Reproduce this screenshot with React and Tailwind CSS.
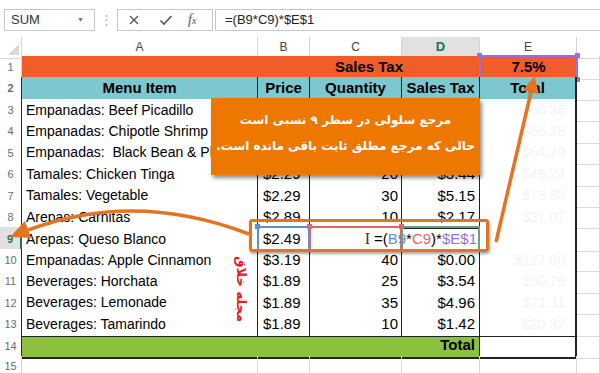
import React from 'react';

const grid = 'grid grid-cols-[22px_236px_52px_92px_78px_97px_1fr]';

const items = [
  { n: 3, a: 'Empanadas: Beef Picadillo', b: '$2.99', c: '25', d: '$5.61', e: '$80.36' },
  { n: 4, a: 'Empanadas: Chipotle Shrimp', b: '$3.49', c: '15', d: '$3.93', e: '$56.28' },
  { n: 5, a: 'Empanadas:  Black Bean & Plantain', b: '$2.99', c: '20', d: '$4.49', e: '$64.29' },
  { n: 6, a: 'Tamales: Chicken Tinga', b: '$2.29', c: '20', d: '$3.44', e: '$49.24' },
  { n: 7, a: 'Tamales: Vegetable', b: '$2.29', c: '30', d: '$5.15', e: '$73.85' },
  { n: 8, a: 'Arepas: Carnitas', b: '$2.89', c: '10', d: '$2.17', e: '$31.07' },
  { n: 9, a: 'Arepas: Queso Blanco', b: '$2.49', c: '', d: null, e: '' },
  { n: 10, a: 'Empanadas: Apple Cinnamon', b: '$3.19', c: '40', d: '$0.00', e: '$127.60' },
  { n: 11, a: 'Beverages: Horchata', b: '$1.89', c: '25', d: '$3.54', e: '$50.79' },
  { n: 12, a: 'Beverages: Lemonade', b: '$1.89', c: '35', d: '$4.96', e: '$71.11' },
  { n: 13, a: 'Beverages: Tamarindo', b: '$1.89', c: '10', d: '$1.42', e: '$20.32' },
];

// selection outline drawn over a cell, like Excel's reference colours
const Sel = ({ box, dot, corner }) => (
  <div className={`absolute -left-px -top-px -right-px -bottom-px border-2 ${box}`}>
    {!corner && (
      <>
        <span className={`absolute -left-[4px] -top-[4px] w-[5px] h-[5px] ${dot}`} />
        <span className={`absolute -right-[4px] -top-[4px] w-[5px] h-[5px] ${dot}`} />
        <span className={`absolute -left-[4px] -bottom-[4px] w-[5px] h-[5px] ${dot}`} />
      </>
    )}
    <span className={`absolute -right-[4px] -bottom-[4px] w-[5px] h-[5px] ${dot}`} />
  </div>
);

const RowHead = ({ n, dark, active }) => (
  <div
    className={`flex items-center justify-center text-[11px] border-b border-b-[#dcdcdc] ${
      active
        ? 'bg-[#e1e1e1] text-[#217346] font-bold border-r-2 border-r-[#217346]'
        : dark
        ? 'bg-white text-[#6b6b6b] border-r border-r-[#2a2a2a]'
        : 'bg-white text-[#6b6b6b] border-r border-r-[#d4d4d4]'
    }`}
  >
    {n}
  </div>
);

const cell = 'relative flex items-center border-r border-b border-[#222] bg-white';
const spare = 'border-r border-b border-[#dadada]';

const App = () => {
  return (
    <div className="relative w-[600px] h-[373px] overflow-hidden bg-white font-['Liberation_Sans',Arial,sans-serif] text-black">
      {/* formula bar */}
      <div className="h-[37px] flex items-start pt-[9px]">
        <div className="ml-[4px] w-[91px] h-[22px] border border-[#c6c6c6] flex items-center justify-between pl-[6px] pr-[10px]">
          <span className="text-[13px] text-[#333]">SUM</span>
          <span className="text-[7px] text-[#777]">▼</span>
        </div>
        <div className="w-[22px] h-[22px] flex items-center justify-center text-[#b0b0b0] text-[13px]">⋮</div>
        <div className="w-[96px] h-[22px] border border-[#c6c6c6] flex items-center">
          <svg width="12" height="12" viewBox="0 0 12 12" className="ml-[10px]">
            <path d="M2 2 L10 10 M10 2 L2 10" stroke="#555" strokeWidth="1.3" fill="none" />
          </svg>
          <svg width="14" height="12" viewBox="0 0 14 12" className="ml-[19px]">
            <path d="M1.5 6.5 L5 10 L12.5 2" stroke="#555" strokeWidth="1.6" fill="none" />
          </svg>
          <span className="ml-[15px] font-['Liberation_Serif',serif] italic text-[14px] text-[#555] leading-none">
            f<span className="text-[10px]">x</span>
          </span>
        </div>
        <div className="ml-[2px] flex-1 h-[22px] border border-r-0 border-[#c6c6c6] flex items-center pl-[9px] text-[13px] text-[#222]">
          =(B9*C9)*$E$1
        </div>
      </div>

      {/* column headers */}
      <div className={`${grid} h-[19px] text-[12px] text-[#444]`}>
        <div className="relative border-r border-b border-[#d4d4d4]">
          <svg width="13" height="13" viewBox="0 0 13 13" className="absolute right-[1px] bottom-[2px]">
            <path d="M12 1 L12 12 L1 12 Z" fill="#d9d9d9" />
          </svg>
        </div>
        <div className="flex items-center justify-center border-r border-b border-[#d4d4d4]">A</div>
        <div className="flex items-center justify-center border-r border-b border-[#d4d4d4]">B</div>
        <div className="flex items-center justify-center border-r border-b border-[#d4d4d4]">C</div>
        <div className="flex items-center justify-center bg-[#e1e1e1] text-[#217346] font-bold text-[13px] border-r border-[#d4d4d4] border-b-2 border-b-[#217346]">
          D
        </div>
        <div className="flex items-center justify-center border-r border-b border-[#d4d4d4]">E</div>
        <div className="border-b border-[#d4d4d4]" />
      </div>

      {/* row 1 */}
      <div className={`${grid} h-[21.43px]`}>
        <RowHead n={1} />
        <div className="bg-[#f05d2a] border-b border-[#222]" />
        <div className="col-span-3 flex items-center justify-center bg-[#f05d2a] border-b border-[#222] text-[15px] font-bold">
          Sales Tax
        </div>
        <div className="relative flex items-center justify-center bg-[#f05d2a] border-b border-[#222] text-[15px] font-bold">
          7.5%
          <Sel box="border-[#9c6fd6]" dot="bg-[#9c6fd6]" />
        </div>
        <div className={spare} />
      </div>

      {/* row 2 */}
      <div className={`${grid} h-[21.43px] text-[15px] font-bold`}>
        <RowHead n={2} dark />
        <div className={`${cell} justify-center !bg-[#7dc7d1]`}>Menu Item</div>
        <div className={`${cell} justify-center !bg-[#7dc7d1]`}>Price</div>
        <div className={`${cell} justify-center !bg-[#7dc7d1]`}>Quantity</div>
        <div className={`${cell} justify-center !bg-[#7dc7d1]`}>Sales Tax</div>
        <div className={`${cell} justify-center !bg-[#7dc7d1] border-r-2`}>Total</div>
        <div className={spare} />
      </div>

      {items.map((r) => (
        <div key={r.n} className={`${grid} h-[21.43px]`}>
          <RowHead n={r.n} dark active={r.n === 9} />
          <div className={`${cell} pl-[4px] text-[14px] whitespace-pre`}>{r.a}</div>
          <div className={`${cell} pl-[5px] text-[15px]`}>
            {r.b}
            {r.n === 9 && <Sel box="border-[#5b8fd9]" dot="bg-[#5b8fd9]" />}
          </div>
          <div className={`${cell} justify-end pr-[3px] text-[15px]`}>
            {r.c}
            {r.n === 9 && <Sel box="border-[#e06666]" dot="bg-[#e06666]" />}
          </div>
          {r.d === null ? (
            <div className={`${cell} justify-end pr-[2px] text-[15px] whitespace-nowrap !bg-transparent`}>
              <span className="flex items-center shrink-0">
                <span className="mr-[4px] font-['Liberation_Serif',serif] text-[16px] text-[#333]">I</span>
                <span>=(</span>
                <span className="text-[#5b8fd9]">B9</span>
                <span>*</span>
                <span className="text-[#e06666]">C9</span>
                <span>)*</span>
                <span className="text-[#9c6fd6]">$E$1</span>
              </span>
              <Sel box="border-[#6aa07c]" dot="bg-[#3d8c57]" corner />
            </div>
          ) : (
            <div className={`${cell} justify-end pr-[4px] text-[15px]`}>{r.d}</div>
          )}
          <div className={`${cell} justify-end pr-[10px] text-[14px] text-[#f4f4f4] border-r-2`}>{r.e}</div>
          <div className={spare} />
        </div>
      ))}

      {/* row 14 */}
      <div className={`${grid} h-[21.43px]`}>
        <RowHead n={14} dark />
        <div className="col-span-4 flex items-center justify-end pr-[4px] bg-[#8cc13f] border-r border-b-2 border-[#222] text-[15px] font-bold">
          Total
        </div>
        <div className="bg-white border-r-2 border-b-2 border-[#222]" />
        <div className={spare} />
      </div>

      {/* row 15 */}
      <div className={`${grid} h-[21.43px]`}>
        <RowHead n={15} />
        <div className={spare} />
        <div className={spare} />
        <div className={spare} />
        <div className={spare} />
        <div className={spare} />
        <div className={spare} />
      </div>

      {/* annotation: box round B9:D9 */}
      <div className="absolute left-[249px] top-[219px] w-[240px] h-[33px] border-[3px] border-[#e5731f] rounded-[3px] shadow-[1px_2px_3px_rgba(0,0,0,0.35)]" />

      {/* annotation arrows */}
      <svg width="600" height="373" viewBox="0 0 600 373" className="absolute left-0 top-0 pointer-events-none">
        <path d="M249 234 Q 135 190 28 230" stroke="#e5731f" strokeWidth="3.5" fill="none" />
        <polygon points="10,237 31,238 25,221" fill="#e5731f" />
        <line x1="496" y1="242" x2="531" y2="92" stroke="#e5731f" strokeWidth="3.5" />
        <polygon points="534.4,76 539,94 523,90.5" fill="#e5731f" />
      </svg>

      {/* annotation: callout */}
      <div
        dir="rtl"
        className="absolute left-[211px] top-[98px] w-[269px] h-[77px] bg-[#ee7700] shadow-[2px_3px_4px_rgba(0,0,0,0.45)] flex flex-col items-center justify-center pb-[8px] gap-[8px] text-white font-bold text-[12px] whitespace-nowrap font-['DejaVu_Sans',sans-serif]"
      >
        <div>مرجع سلولی در سطر ۹ نسبی است</div>
        <div>حالی که مرجع مطلق ثابت باقی مانده است.</div>
      </div>

      {/* watermark */}
      <div className="absolute left-[206px] top-[281px] w-[70px] h-[16px] flex items-center justify-center rotate-90 text-[#e3201f] font-bold text-[13px] font-['DejaVu_Sans',sans-serif] whitespace-nowrap">
        مجله خلاق
      </div>
    </div>
  );
};

export default App;
